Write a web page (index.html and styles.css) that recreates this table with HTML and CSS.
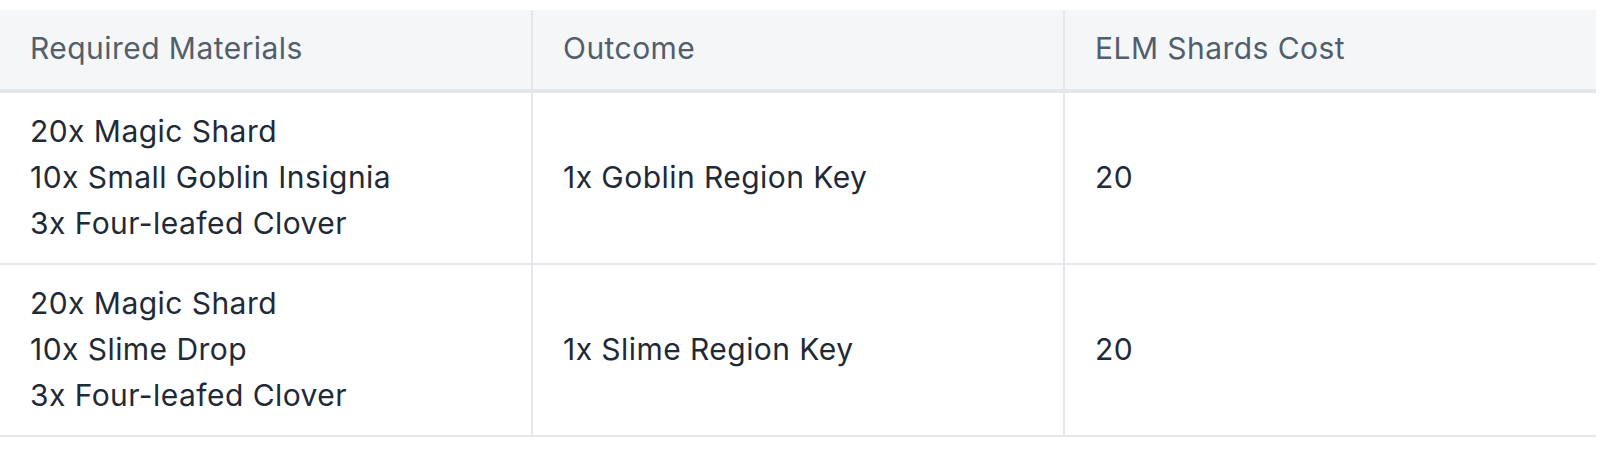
FILE: index.html
```html
<!DOCTYPE html>
<html>
<head>
<meta charset="utf-8">
<link rel="stylesheet" href="styles.css">
</head>
<body>
<div class="wrap">
<table class="recipes">
  <thead>
    <tr>
      <th>Required Materials</th>
      <th>Outcome</th>
      <th>ELM Shards Cost</th>
    </tr>
  </thead>
  <tbody>
    <tr>
      <td>20x Magic Shard<br>10x Small Goblin Insignia<br>3x Four-leafed Clover</td>
      <td>1x Goblin Region Key</td>
      <td>20</td>
    </tr>
    <tr>
      <td>20x Magic Shard<br>10x Slime Drop<br>3x Four-leafed Clover</td>
      <td>1x Slime Region Key</td>
      <td>20</td>
    </tr>
  </tbody>
</table>
</div>
</body>
</html>
```

FILE: styles.css
```css
html, body {
  margin: 0;
  padding: 0;
  background: #ffffff;
}
.wrap {
  padding-top: 10px;
  width: 1596px;
}
.recipes {
  width: 100%;
  border-collapse: collapse;
  table-layout: fixed;
  font-family: Inter, "Noto Sans", sans-serif;
  font-size: 30px;
  line-height: 46px;
  letter-spacing: 0.45px;
}
.recipes th {
  background: #f5f6f8;
  color: #525e6b;
  font-weight: 400;
  text-align: left;
  padding: 15px 30px 18px;
  border-bottom: 4px solid #e3e7eb;
  border-left: 2px solid #e4e8ec;
}
.recipes td {
  color: #1f2a37;
  padding: 15px 30px 17px;
  vertical-align: middle;
  border-bottom: 2px solid #e4e8ec;
  border-left: 2px solid #e4e8ec;
}
.recipes th:first-child,
.recipes td:first-child {
  border-left: none;
}
```
